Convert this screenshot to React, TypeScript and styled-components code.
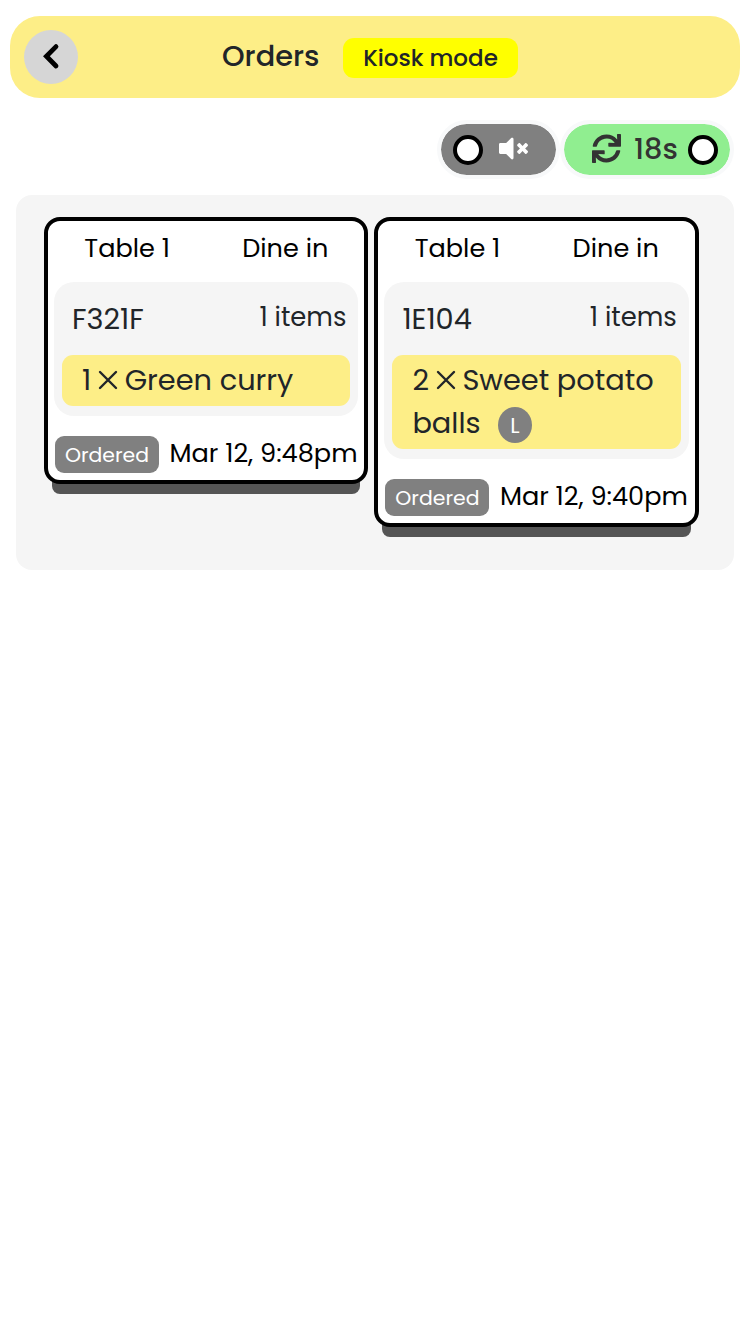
import React from "react";
import styled, { createGlobalStyle } from "styled-components";
import { FaSync, FaVolumeMute } from "react-icons/fa";

const Global = createGlobalStyle`
  * { box-sizing: border-box; }
  body {
    margin: 0;
    background: #fff;
    color: #212529;
    font-family: Poppins, Inter, "Liberation Sans", sans-serif;
  }
`;

const Header = styled.header`
  display: flex;
  align-items: center;
  height: 82px;
  margin: 16px 10px 0;
  padding: 0 14px;
  border-radius: 30px;
  background: #fdee87;
`;

const BackButton = styled.button`
  display: flex;
  align-items: center;
  justify-content: center;
  width: 54px;
  height: 54px;
  padding: 0;
  border: 0;
  border-radius: 50%;
  background: #d6d6d6;
`;

const Title = styled.h1`
  margin: 0 0 3px 144px;
  width: 121px;
  font-size: 28.8px;
  font-weight: 500;
  line-height: 40px;
`;

const KioskBadge = styled.span`
  width: 175px;
  margin-top: 2px;
  border-radius: 11px;
  background: #ff0;
  font-size: 23px;
  font-weight: 500;
  line-height: 40px;
  text-align: center;
  white-space: nowrap;
`;

const Controls = styled.div`
  display: flex;
  justify-content: flex-end;
  margin: 22px 16px 0;
`;

const Toggle = styled.div<{ $on?: boolean }>`
  display: flex;
  align-items: center;
  width: ${(p) => (p.$on ? 174 : 123)}px;
  height: 59px;
  padding: ${(p) => (p.$on ? "0 12px 0 27px" : "0 12px")};
  border: 4px solid #f8f9fa;
  border-radius: 30px;
  background: ${(p) => (p.$on ? "#90ee90" : "#808080")};
  background-clip: padding-box;
  color: ${(p) => (p.$on ? "#333" : "#fff")};
`;

const Knob = styled.span`
  flex: none;
  width: 30px;
  height: 30px;
  margin-top: 1px;
  border: 4px solid #000;
  border-radius: 50%;
  background: #fff;
`;

const MuteIcon = styled(FaVolumeMute)`
  margin: 0 0 3px 16px;
`;

const SyncIcon = styled(FaSync)`
  flex: none;
  margin: 0 0 3px 0.5px;
`;

const Countdown = styled.span`
  flex: 1;
  margin: 0 0 2px 13.5px;
  font-size: 28.8px;
  font-weight: 500;
  line-height: 40px;
`;

const Board = styled.main`
  display: flex;
  align-items: flex-start;
  gap: 6px;
  height: 375px;
  margin: 16px 16px 0;
  padding: 22px 0 0 28px;
  border-radius: 16px;
  background: #f5f5f5;
`;

const Card = styled.article`
  width: 324.4px;
  border: 4px solid #000;
  border-radius: 16px;
  background: #fff;
  box-shadow: 0 18px 0 -8px #555;
  color: #000;
`;

const CardHead = styled.div`
  display: flex;
  height: 61px;
  font-size: 25.6px;
  line-height: 55px;
  text-align: center;
`;

const HeadCell = styled.div`
  flex: 1;
`;

const Group = styled.section`
  margin: 0 6px;
  padding: 0 8px 10px;
  border-radius: 20px;
  background: #f5f5f5;
  color: #212529;
`;

const GroupHead = styled.div`
  display: flex;
  justify-content: space-between;
  height: 73px;
  padding: 0 4px 0 10px;
`;

const OrderCode = styled.span`
  font-size: 28.8px;
  line-height: 75px;
`;

const ItemCount = styled.span`
  font-size: 25.8px;
  line-height: 71px;
`;

const Item = styled.div`
  padding: 4px 20px;
  border-radius: 11px;
  background: #fdee87;
  font-size: 28.8px;
  line-height: 43px;
`;

const Quantity = styled.span`
  margin-right: 7px;
`;

const TimesIcon = styled.svg`
  width: 20px;
  height: 20px;
  margin-right: 6.5px;
  vertical-align: 0;
`;

const SizeBadge = styled.span`
  display: inline-block;
  width: 34px;
  height: 36px;
  margin: -4px 0 -6px 17px;
  border-radius: 50%;
  background: #808080;
  color: #fff;
  font-size: 21.6px;
  line-height: 37px;
  text-align: center;
  text-indent: 1px;
  vertical-align: 0;
`;

const CardFoot = styled.div`
  display: flex;
  align-items: center;
  padding: 20px 0 7.4px 7px;
`;

const Status = styled.span`
  width: 104px;
  height: 37px;
  border-radius: 9px;
  background: #808080;
  color: #fff;
  font-size: 20.4px;
  line-height: 39px;
  text-align: center;
`;

const Time = styled.time`
  margin: 0 0 2px 10.5px;
  font-size: 25.6px;
  line-height: 33px;
  white-space: nowrap;
`;

type Order = {
  code: string;
  qty: number;
  name: string;
  size?: string;
  time: string;
};

const orders: Order[] = [
  { code: "F321F", qty: 1, name: "Green curry", time: "Mar 12, 9:48pm" },
  { code: "1E104", qty: 2, name: "Sweet potato balls", size: "L", time: "Mar 12, 9:40pm" },
];

function OrderCard({ order }: { order: Order }) {
  return (
    <Card>
      <CardHead>
        <HeadCell>Table 1</HeadCell>
        <HeadCell>Dine in</HeadCell>
      </CardHead>
      <Group>
        <GroupHead>
          <OrderCode>{order.code}</OrderCode>
          <ItemCount>1 items</ItemCount>
        </GroupHead>
        <Item>
          <Quantity>{order.qty}</Quantity>
          <TimesIcon viewBox="0 0 20 20" fill="none" stroke="currentColor" strokeWidth="2.4" strokeLinecap="round">
            <path d="M2 2l16 16M18 2 2 18" />
          </TimesIcon>
          {order.name}
          {order.size && <SizeBadge>{order.size}</SizeBadge>}
        </Item>
      </Group>
      <CardFoot>
        <Status>Ordered</Status>
        <Time>{order.time}</Time>
      </CardFoot>
    </Card>
  );
}

export default function App() {
  return (
    <>
      <Global />
      <Header>
        <BackButton aria-label="Back">
          <svg width="54" height="54" viewBox="0 0 54 54" fill="none" stroke="#000" strokeWidth="4.8" strokeLinecap="round">
            <path d="M32 16.6 22.4 26.2l9.6 9.8" />
          </svg>
        </BackButton>
        <Title>Orders</Title>
        <KioskBadge>Kiosk mode</KioskBadge>
      </Header>
      <Controls>
        <Toggle>
          <Knob />
          <MuteIcon size={29} />
        </Toggle>
        <Toggle $on>
          <SyncIcon size={29} />
          <Countdown>18s</Countdown>
          <Knob />
        </Toggle>
      </Controls>
      <Board>
        {orders.map((order) => (
          <OrderCard key={order.code} order={order} />
        ))}
      </Board>
    </>
  );
}
